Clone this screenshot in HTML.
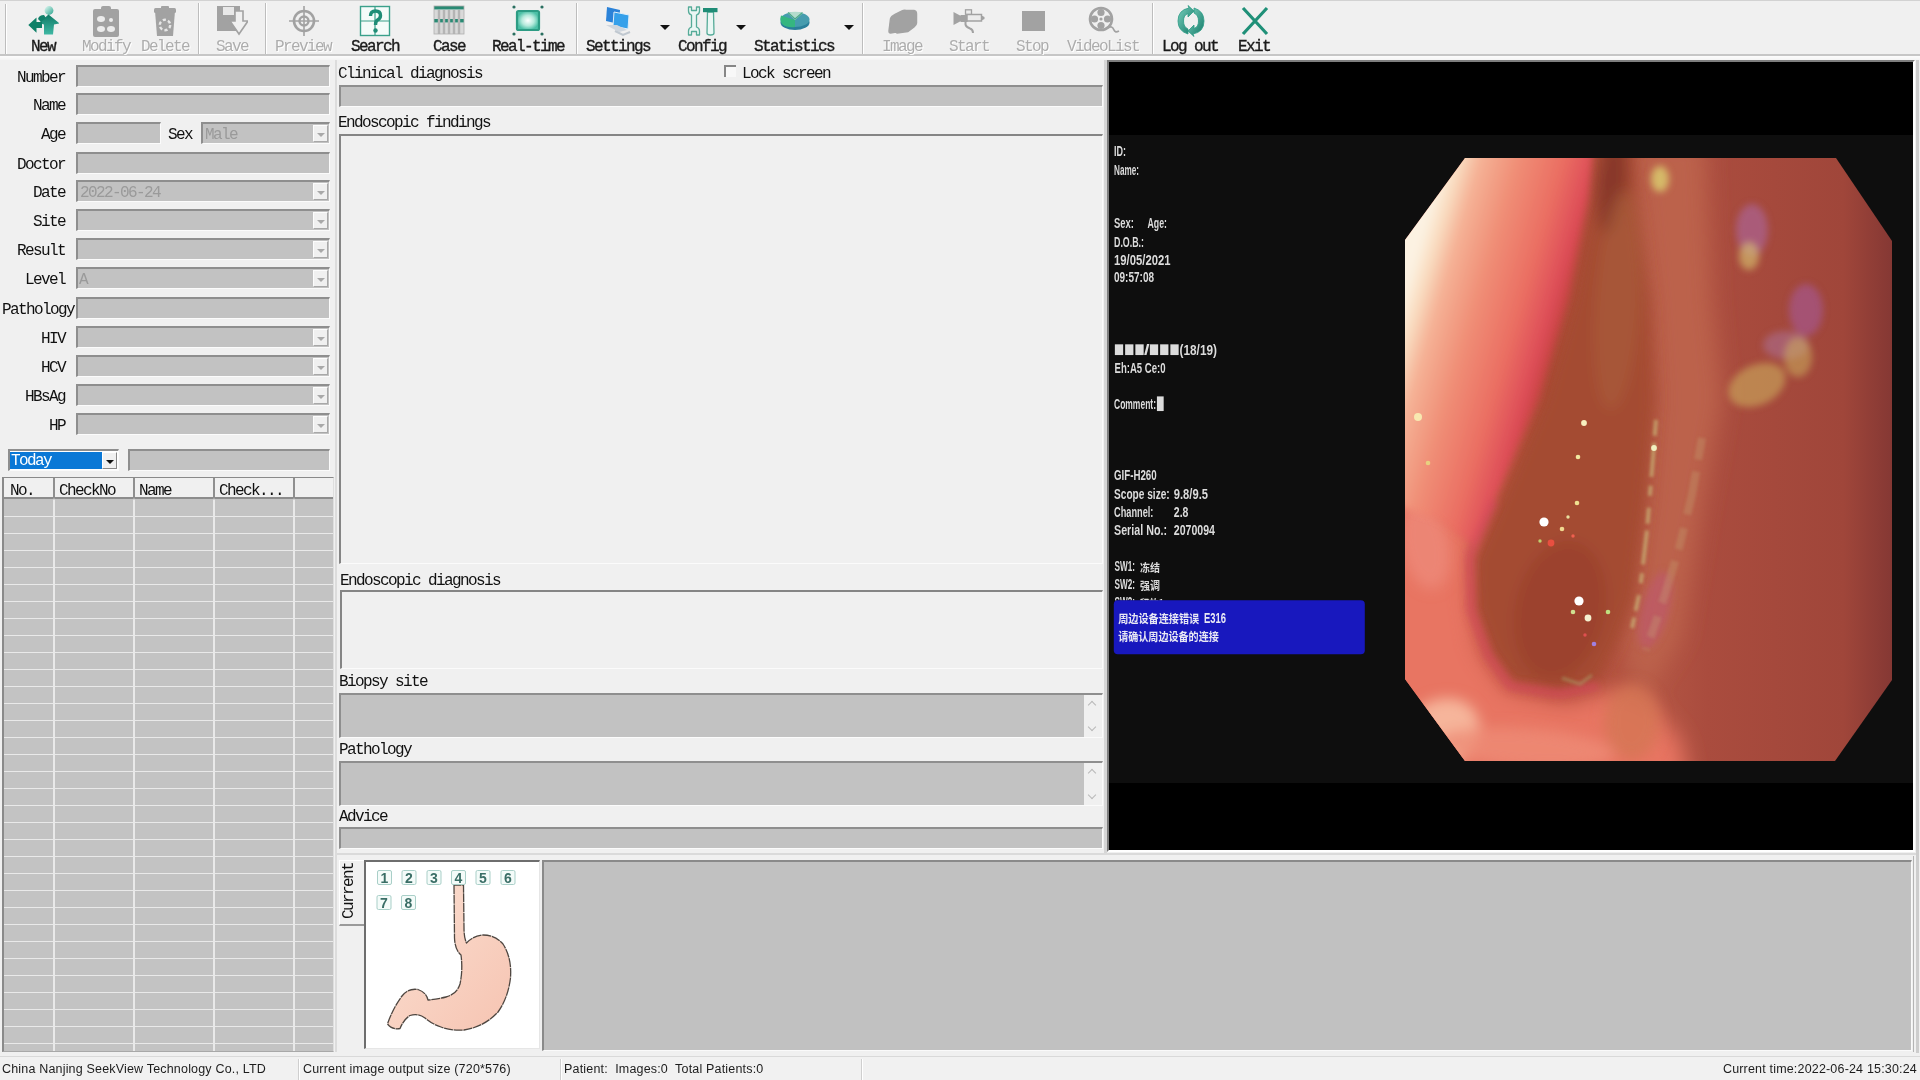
<!DOCTYPE html>
<html lang="en">
<head>
<meta charset="utf-8">
<title>SeekView Endoscopy Workstation</title>
<style>
*{box-sizing:border-box;margin:0;padding:0}
html,body{width:1920px;height:1080px;overflow:hidden;background:#f0f0f0}
body{position:relative;font-family:"Liberation Mono","Noto Sans CJK SC",monospace;font-size:16px;letter-spacing:-1.6px;color:#111;line-height:16px}
#app{position:absolute;left:0;top:0;width:1920px;height:1080px;will-change:transform}
.a{position:absolute}
.t{position:absolute;white-space:pre;height:16px}
.r{text-align:right}
.f{position:absolute;background:#c2c2c2;border-style:solid;border-width:2px 1px 1px 2px;border-color:#8e8e8e #fbfbfb #fbfbfb #8e8e8e}
.fw{position:absolute;background:#f0f0f0;border-style:solid;border-width:2px 1px 1px 2px;border-color:#858585 #fbfbfb #fbfbfb #858585}
.cb{position:absolute;right:1px;top:1px;bottom:1px;width:15px;background:#f0f0f0;border:1px solid #fdfdfd;border-right-color:#a8a8a8;border-bottom-color:#a8a8a8}
.cb:after{content:"";position:absolute;left:3px;top:7px;border:4px solid transparent;border-top:4px solid #a9a9a9;border-bottom:0}
.g{color:#9a9a9a}
.vl{top:0;width:2px;height:100%;background:linear-gradient(180deg,#8f8f8f 0,#8f8f8f 20px,#e9e9e9 22px)}
.cb.k{border-color:#fff #888 #888 #fff}
.cb.k:after{border-top-color:#111}
.sc{position:absolute;right:0;top:0;bottom:0;width:18px;background:#f0f0f0}
.sc i{position:absolute;left:5px;width:6px;height:6px;border:1.5px solid #b9b9b9;border-right:0;border-bottom:0}
.sc .u{top:7px;transform:rotate(45deg)}
.sc .dn{bottom:7px;transform:rotate(225deg)}
/* toolbar */
#tb{position:absolute;left:0;top:0;width:1920px;height:56px;background:#f0f0f0;border-top:1px solid #d2d2d2;border-bottom:2px solid #c6c6c6}
#tb .l{position:absolute;top:38px;height:16px;font-weight:normal;-webkit-text-stroke:.35px #1a1a1a;white-space:pre;transform:translateX(-50%);color:#1a1a1a}
#tb .d{color:#adadad;text-shadow:1px 1px 0 #fff;-webkit-text-stroke:0}
#tb .s{position:absolute;top:2px;height:51px;width:2px;border-left:1px solid #bdbdbd;border-right:1px solid #fff}
#tb .ar{position:absolute;top:24px;border:5px solid transparent;border-top:5px solid #111;border-bottom:0}
#tb svg{position:absolute}
/* status */
#sb{position:absolute;left:0;top:1056px;width:1920px;height:24px;background:#f1f1f1;border-top:1px solid #d9d9d9;font-family:"Liberation Sans",sans-serif;font-size:12.5px;letter-spacing:.18px;color:#1c1c1c}
#sb span{position:absolute;top:4px;white-space:pre}
#sb i{position:absolute;top:2px;height:22px;width:2px;border-left:1px solid #cfcfcf;border-right:1px solid #fff}
</style>
</head>
<body>
<div id="app">
<div id="tb">
<b class="s" style="left:5px;top:3px;height:50px"></b>
<svg style="left:27.0px;top:4px" width="32" height="32" viewBox="0 0 32 32"><defs><linearGradient id="gn" x1="0" y1="0" x2="0" y2="1"><stop offset="0" stop-color="#0f7a66"/><stop offset="1" stop-color="#3fb8a4"/></linearGradient><linearGradient id="gh" x1="0" y1="0" x2="1" y2="1"><stop offset="0" stop-color="#e8fbf6"/><stop offset="1" stop-color="#2aa48e"/></linearGradient></defs>
<circle cx="22" cy="5.5" r="4.4" fill="url(#gh)"/><path d="M21.500 9.500 L32.500 18.500 L27 19.500 L26 29.500 L17 29.500 L17 19.500 L12 18 Z" fill="url(#gn)"/><path d="M1.300 20 L9.500 12.500 L9.500 17 L15 17 L15 23 L9.500 23 L9.500 27.700 Z" fill="#0f8068"/><path d="M11 14 Q12 10 17 10 L19 13 L14 17 Z" fill="#12806a"/></svg>
<span class="l" style="left:43px">New</span>
<svg style="left:90.0px;top:4px" width="32" height="32" viewBox="0 0 32 32"><rect x="3" y="4" width="26" height="28" rx="2" fill="#a2a2a2"/><rect x="11" y="1" width="10" height="6" rx="2" fill="#a2a2a2"/><ellipse cx="11" cy="14" rx="4" ry="3" fill="#ececec"/><ellipse cx="21" cy="15" rx="2" ry="2" fill="#ececec"/><ellipse cx="11" cy="24" rx="4" ry="3" fill="#ececec"/><ellipse cx="21" cy="24" rx="4" ry="3" fill="#ececec"/></svg>
<span class="l d" style="left:106px">Modify</span>
<svg style="left:149.0px;top:4px" width="32" height="32" viewBox="0 0 32 32"><path d="M6 6 L26 6 L24 31 L8 31 Z" fill="#a2a2a2"/><rect x="5" y="3" width="22" height="5" rx="1.5" fill="#a2a2a2"/><rect x="12" y="1" width="8" height="4" rx="1" fill="#a2a2a2"/><circle cx="16" cy="20" r="5.2" fill="none" stroke="#e6e6e6" stroke-width="2.4" stroke-dasharray="3.2 2.2"/></svg>
<span class="l d" style="left:165px">Delete</span>
<b class="s" style="left:198px"></b>
<svg style="left:216.0px;top:4px" width="32" height="32" viewBox="0 0 32 32"><path d="M1 1 L24 1 L24 26 L1 26 Z" fill="#a2a2a2"/><rect x="7" y="2" width="11" height="8" fill="#e8e8e8"/><path d="M19 6 L27 6 L27 16 L32 16 L23 29 L14 16 L19 16 Z" fill="#f0f0f0" stroke="#a2a2a2" stroke-width="1.6"/></svg>
<span class="l d" style="left:232px">Save</span>
<b class="s" style="left:265px"></b>
<svg style="left:287.5px;top:4px" width="32" height="32" viewBox="0 0 32 32"><circle cx="16" cy="16" r="10" fill="none" stroke="#a2a2a2" stroke-width="2.6"/><circle cx="16" cy="16" r="4.5" fill="none" stroke="#a2a2a2" stroke-width="2.4"/><path d="M16 1 V31 M1 16 H31" stroke="#a2a2a2" stroke-width="1.6"/></svg>
<span class="l d" style="left:303px">Preview</span>
<svg style="left:358.5px;top:4px" width="32" height="32" viewBox="0 0 32 32"><rect x="1.5" y="1.5" width="29" height="29" fill="#f4fbf9" stroke="#3aa08a" stroke-width="1.4"/><path d="M16 1 V31 M1 16 H31" stroke="#3aa08a" stroke-width="1.2"/><path d="M11.5 11 Q11.5 6 16.5 6 Q21.5 6 21.5 10.5 Q21.5 13.5 18.5 15 Q16.5 16.2 16.5 20" fill="none" stroke="#1e8c76" stroke-width="3.4"/><circle cx="16.5" cy="25.5" r="2.2" fill="#1e8c76"/></svg>
<span class="l" style="left:375px">Search</span>
<svg style="left:433.0px;top:4px" width="32" height="32" viewBox="0 0 32 32"><rect x="1" y="1" width="30" height="3.5" fill="#2a8a74"/><rect x="1" y="14" width="30" height="3.5" fill="#2a8a74"/><rect x="1" y="5" width="30" height="9" fill="#d9d9d9"/><rect x="1" y="18" width="30" height="11" fill="#d9d9d9"/><path d="M6 5 V29 M11 5 V29 M16 5 V29 M21 5 V29 M26 5 V29" stroke="#b4b4b4" stroke-width="2.4"/><rect x="1" y="1" width="30" height="28" fill="none" stroke="#b0b0b0" stroke-width=".8"/></svg>
<span class="l" style="left:449px">Case</span>
<svg style="left:512.0px;top:4px" width="32" height="32" viewBox="0 0 32 32"><defs><radialGradient id="gr"><stop offset="0" stop-color="#fff"/><stop offset=".55" stop-color="#b6eadc"/><stop offset="1" stop-color="#4cc0a6"/></radialGradient></defs><rect x="5" y="6" width="22" height="19" rx="1.5" fill="url(#gr)" stroke="#2d9c84" stroke-width="2.2"/><circle cx="2" cy="2" r="1.6" fill="#2a6f60"/><circle cx="30" cy="2" r="1.6" fill="#2a6f60"/><circle cx="2" cy="29" r="1.6" fill="#2a6f60"/><circle cx="30" cy="29" r="1.6" fill="#2a6f60"/></svg>
<span class="l" style="left:528px">Real-time</span>
<b class="s" style="left:576px"></b>
<svg style="left:602.5px;top:4px" width="32" height="32" viewBox="0 0 32 32"><path d="M4 2 L17 5 L16 19 L3 16 Z" fill="#2b82d8"/><path d="M11 7 L26 10 L25 24 L10 21 Z" fill="#35a0ea" stroke="#dfeefa" stroke-width="1"/><path d="M3 20 L16 27 L24 25 L14 20 Z" fill="#cfd6de"/><path d="M12 26 L20 30 L27 27" fill="none" stroke="#c0c8d0" stroke-width="2"/></svg>
<span class="l" style="left:618px">Settings</span>
<b class="ar" style="left:660px"></b>
<svg style="left:686.5px;top:4px" width="32" height="32" viewBox="0 0 32 32"><path d="M1.500 2 L1.500 6 Q1.500 9 4.500 10 L4.500 22 Q1.500 23 1.500 26 L1.500 30 L4.500 30 L4.500 26.500 L9.500 26.500 L9.500 30 L12.500 30 L12.500 26 Q12.500 23 9.500 22 L9.500 10 Q12.500 9 12.500 6 L12.500 2 L9.500 2 L9.500 5.500 L4.500 5.500 L4.500 2 Z" fill="#eaf7f4" stroke="#55ab98" stroke-width="1.300" stroke-linejoin="round"/><path d="M20.500 7 L20 28 Q20 30 23.500 30 Q27 30 27 28 L26.500 7 Z" fill="#eaf7f4" stroke="#55ab98" stroke-width="1.300"/><rect x="16" y="3" width="14.500" height="4.200" fill="#1f8c76"/></svg>
<span class="l" style="left:702px">Config</span>
<b class="ar" style="left:736px"></b>
<svg style="left:778.5px;top:4px" width="32" height="32" viewBox="0 0 32 32"><ellipse cx="16" cy="17.500" rx="14.500" ry="7.500" fill="#2a7f9a"/><ellipse cx="16" cy="14.500" rx="14.500" ry="7.500" fill="#469cae"/><path d="M16 15 L2 10.500 Q0.500 15 3 19 Q8 23 16 22 Z" fill="#35b680"/><path d="M16 15 L8.500 8 Q16 5.500 24 8 Z" fill="#b4dccd"/><path d="M9 7.500 L16 14 L23.500 7.500" fill="none" stroke="#4aa888" stroke-width="1.200"/></svg>
<span class="l" style="left:794px">Statistics</span>
<b class="ar" style="left:844px"></b>
<b class="s" style="left:862px"></b>
<svg style="left:886.5px;top:4px" width="32" height="32" viewBox="0 0 32 32"><path d="M3.500 14 Q4 11.500 8 9.500 L15 6 Q17 5 19 5.500 L27 5.500 Q29.500 6 29.500 9 L29.500 18 Q29.500 20 27 22 L21 26.500 L10 28 L9 27 L3.500 28 Q2 28 2 26 Z" fill="#a2a2a2" stroke="#a2a2a2" stroke-width="1.500" stroke-linejoin="round"/></svg>
<span class="l d" style="left:902px">Image</span>
<svg style="left:953.0px;top:4px" width="32" height="32" viewBox="0 0 32 32"><path d="M0.500 7 L8 11 L8 16 L0.500 20 Z" fill="#a2a2a2"/><rect x="7.500" y="10" width="7" height="7" fill="#a2a2a2"/><rect x="14" y="9.500" width="14.500" height="6.500" fill="#ececec" stroke="#a2a2a2" stroke-width="1.500"/><path d="M28.500 10.500 L31.500 12 L31.500 14 L28.500 15.500 Z" fill="#a2a2a2"/><rect x="12.500" y="4.800" width="6" height="4.500" fill="#ececec" stroke="#a2a2a2" stroke-width="1.300"/><path d="M12.500 16 L12.500 19.500 Q13 22 17 23.500 Q20 24.500 20 28" fill="none" stroke="#a2a2a2" stroke-width="2"/></svg>
<span class="l d" style="left:969px">Start</span>
<svg style="left:1016.5px;top:4px" width="32" height="32" viewBox="0 0 32 32"><rect x="5" y="6" width="23" height="20" fill="#a2a2a2"/></svg>
<span class="l d" style="left:1032px">Stop</span>
<svg style="left:1087.5px;top:4px" width="32" height="32" viewBox="0 0 32 32"><circle cx="13" cy="14" r="11" fill="none" stroke="#a2a2a2" stroke-width="2.6"/><circle cx="13" cy="7.5" r="3.6" fill="#a2a2a2"/><circle cx="13" cy="20.5" r="3.6" fill="#a2a2a2"/><circle cx="6.5" cy="14" r="3.6" fill="#a2a2a2"/><circle cx="19.5" cy="14" r="3.6" fill="#a2a2a2"/><circle cx="13" cy="14" r="1.6" fill="#a2a2a2"/><path d="M20 23 Q24 20 26 25 Q27 28 31 26" fill="none" stroke="#a2a2a2" stroke-width="1.8"/></svg>
<span class="l d" style="left:1103px">VideoList</span>
<b class="s" style="left:1152px"></b>
<svg style="left:1175.0px;top:4px" width="32" height="32" viewBox="0 0 32 32"><defs><linearGradient id="gl" x1="0" y1="0" x2="1" y2="1"><stop offset="0" stop-color="#7ad0be"/><stop offset="1" stop-color="#127866"/></linearGradient></defs><path d="M14 3 Q3 5 3 16 Q3 26 13 29 L13 24 Q8.5 22 8.5 16 Q8.5 10 13 8.5 L13 12 L19 6 L13 0.5 Z" fill="url(#gl)" stroke="#2a9a84" stroke-width=".8"/><path d="M18 29 Q29 27 29 16 Q29 6 19 3 L19 8 Q23.5 10 23.5 16 Q23.5 22 19 23.5 L19 20 L13 26 L19 31.5 Z" fill="url(#gl)" stroke="#2a9a84" stroke-width=".8"/></svg>
<span class="l" style="left:1190px">Log out</span>
<svg style="left:1238.5px;top:4px" width="32" height="32" viewBox="0 0 32 32"><path d="M4 3 L28 29 M28 3 L4 29" stroke="#1f9078" stroke-width="3.2" stroke-linecap="butt"/></svg>
<span class="l" style="left:1254px">Exit</span>
</div>
<div class="a" style="left:0;top:56px;width:1920px;height:4px;background:linear-gradient(180deg,#fcfcfc,#f4f4f4)"></div>

<div id="left">
<div class="t r" style="left:0;width:65px;top:70px">Number</div>
<div class="f" style="left:76px;top:65px;width:254px;height:22px"></div>
<div class="t r" style="left:0;width:65px;top:98px">Name</div>
<div class="f" style="left:76px;top:93px;width:254px;height:22px"></div>
<div class="t r" style="left:0;width:65px;top:127px">Age</div>
<div class="f" style="left:76px;top:122px;width:85px;height:22px"></div>
<div class="t" style="left:168px;top:127px">Sex</div><div class="f" style="left:201px;top:122px;width:129px;height:22px"><span class="t g" style="left:2px;top:3px">Male</span><b class="cb"></b></div>
<div class="t r" style="left:0;width:65px;top:157px">Doctor</div>
<div class="f" style="left:76px;top:152px;width:254px;height:22px"></div>
<div class="t r" style="left:0;width:65px;top:185px">Date</div>
<div class="f" style="left:76px;top:180px;width:254px;height:22px"><span class="t g" style="left:2px;top:3px">2022-06-24</span><b class="cb"></b></div>
<div class="t r" style="left:0;width:65px;top:214px">Site</div>
<div class="f" style="left:76px;top:209px;width:254px;height:22px"><b class="cb"></b></div>
<div class="t r" style="left:0;width:65px;top:243px">Result</div>
<div class="f" style="left:76px;top:238px;width:254px;height:22px"><b class="cb"></b></div>
<div class="t r" style="left:0;width:65px;top:272px">Level</div>
<div class="f" style="left:76px;top:267px;width:254px;height:22px"><span class="t g" style="left:1px;top:3px">A</span><b class="cb"></b></div>
<div class="t r" style="left:0;width:74px;top:302px">Pathology</div>
<div class="f" style="left:76px;top:297px;width:254px;height:22px"></div>
<div class="t r" style="left:0;width:65px;top:331px">HIV</div>
<div class="f" style="left:76px;top:326px;width:254px;height:22px"><b class="cb"></b></div>
<div class="t r" style="left:0;width:65px;top:360px">HCV</div>
<div class="f" style="left:76px;top:355px;width:254px;height:22px"><b class="cb"></b></div>
<div class="t r" style="left:0;width:65px;top:389px">HBsAg</div>
<div class="f" style="left:76px;top:384px;width:254px;height:22px"><b class="cb"></b></div>
<div class="t r" style="left:0;width:65px;top:418px">HP</div>
<div class="f" style="left:76px;top:413px;width:254px;height:22px"><b class="cb"></b></div>
<div class="f" style="left:8px;top:449px;width:111px;height:22px;background:#fff"><span class="t" style="left:0;top:1px;width:92px;height:17px;background:#0a78d6;color:#fff;padding-left:1px;line-height:19px">Today</span><b class="cb k"></b></div>
<div class="f" style="left:128px;top:449px;width:202px;height:22px"></div>
<div id="grid" class="a" style="left:2px;top:477px;width:332px;height:575px;border:1px solid #8a8a8a;border-width:1px 1px 1px 2px;border-right-color:#dedede;border-bottom-color:#a8a8a8;background:#c3c3c3">
<div class="a" style="left:0;top:0;width:100%;height:21px;background:#f0f0f0;border-bottom:2px solid #8c8c8c"></div>
<div class="a" style="left:0;top:22px;width:100%;bottom:0;background:repeating-linear-gradient(180deg,transparent 0,transparent 16px,#e9e9e9 16px,#e9e9e9 17px)"></div>
<div class="t" style="left:6px;top:5px">No.</div>
<div class="t" style="left:55px;top:5px">CheckNo</div>
<div class="t" style="left:135px;top:5px">Name</div>
<div class="t" style="left:215px;top:5px">Check...</div>
<i class="a vl" style="left:49px"></i>
<i class="a vl" style="left:129px"></i>
<i class="a vl" style="left:209px"></i>
<i class="a vl" style="left:289px"></i>
</div>
<div class="a" style="left:335px;top:60px;width:2px;height:992px;background:#dcdcdc"></div>
</div>

<div id="mid">
<div class="t" style="left:338px;top:66px">Clinical diagnosis</div>
<div class="a" style="left:724px;top:65px;width:12px;height:12px;background:#f8f8f8;border:2px solid #868686;border-right:0;border-bottom:0"></div>
<div class="t" style="left:742px;top:66px">Lock screen</div>
<div class="f" style="left:339px;top:85px;width:764px;height:22px"></div>
<div class="t" style="left:338px;top:115px">Endoscopic findings</div>
<div class="fw" style="left:339px;top:134px;width:764px;height:430px"></div>
<div class="t" style="left:340px;top:573px">Endoscopic diagnosis</div>
<div class="fw" style="left:340px;top:590px;width:763px;height:79px"></div>
<div class="t" style="left:339px;top:674px">Biopsy site</div>
<div class="f" style="left:339px;top:693px;width:764px;height:45px"><div class="sc"><i class="u"></i><i class="dn"></i></div></div>
<div class="t" style="left:339px;top:742px">Pathology</div>
<div class="f" style="left:339px;top:761px;width:764px;height:45px"><div class="sc"><i class="u"></i><i class="dn"></i></div></div>
<div class="t" style="left:339px;top:809px">Advice</div>
<div class="f" style="left:339px;top:827px;width:764px;height:22px"></div>
<div class="a" style="left:1104px;top:60px;width:3px;height:793px;background:#d6d6d6"></div>
</div>

<div id="vid" class="a" style="left:1107px;top:60px;width:808px;height:792px;border:2px solid #7e7e7e;border-right-color:#fff;border-bottom-color:#fff;background:#000"></div>
<svg class="a" style="left:1109px;top:62px" width="804" height="788" viewBox="1109 62 804 788">
<defs>
<clipPath id="oct"><polygon points="1465,158 1836,158 1892,241 1892,680 1835,761 1465,761 1405,679 1405,240"/></clipPath>
<filter id="b14" x="-30%" y="-30%" width="160%" height="160%"><feGaussianBlur stdDeviation="11"/></filter>
<filter id="b8" x="-30%" y="-30%" width="160%" height="160%"><feGaussianBlur stdDeviation="7"/></filter>
<filter id="b4" x="-30%" y="-30%" width="160%" height="160%"><feGaussianBlur stdDeviation="3.5"/></filter>
<filter id="b2" x="-30%" y="-30%" width="160%" height="160%"><feGaussianBlur stdDeviation="1.6"/></filter>
<filter id="b1" x="-30%" y="-30%" width="160%" height="160%"><feGaussianBlur stdDeviation="0.7"/></filter>
<linearGradient id="base" gradientUnits="userSpaceOnUse" x1="1405" y1="0" x2="1892" y2="0"><stop offset="0" stop-color="#e87060"/><stop offset=".3" stop-color="#b04a38"/><stop offset=".5" stop-color="#b45644"/><stop offset=".62" stop-color="#aa4c3e"/><stop offset=".9" stop-color="#a0463a"/><stop offset="1" stop-color="#853834"/></linearGradient>
<linearGradient id="fold" gradientUnits="userSpaceOnUse" x1="1373" y1="400" x2="1526" y2="445"><stop offset="0" stop-color="#fcf2e2"/><stop offset=".1" stop-color="#f9dcc0"/><stop offset=".22" stop-color="#f5b296"/><stop offset=".45" stop-color="#f08e76"/><stop offset=".72" stop-color="#ea6e62"/><stop offset=".9" stop-color="#de4e58"/><stop offset="1" stop-color="#c64242"/></linearGradient>
<clipPath id="sw3"><rect x="1110" y="590" width="100" height="10.5"/></clipPath>
</defs>
<rect x="1109" y="135" width="804" height="648" fill="#0e0e0e"/>
<g clip-path="url(#oct)">
<rect x="1400" y="150" width="500" height="620" fill="url(#base)"/>
<g filter="url(#b14)">
<polygon points="1634,140 1705,140 1712,300 1722,400 1700,520 1680,640 1640,700 1625,650 1648,500 1657,400 1650,300" fill="#bc624c"/>
<polygon points="1380,470 1440,470 1470,520 1468,600 1476,650 1505,690 1570,702 1605,690 1650,705 1680,740 1690,790 1380,790" fill="#e87462"/>
</g>
<g filter="url(#b8)">
<polygon points="1598,140 1592,200 1572,300 1542,400 1498,500 1472,560 1474,610 1490,655 1512,684 1560,690 1596,682 1616,646 1634,598 1646,500 1655,400 1650,300 1636,200 1632,140" fill="#a44c32"/>
<ellipse cx="1612" cy="185" rx="14" ry="50" fill="#84362a" opacity="0.85" transform="rotate(5 1612 185)"/>
<ellipse cx="1560" cy="610" rx="45" ry="70" fill="#98402e" opacity="0.7" transform="rotate(12 1560 610)"/>
<ellipse cx="1618" cy="300" rx="22" ry="110" fill="#a85c3a" opacity="0.7" transform="rotate(4 1618 300)"/>
<ellipse cx="1440" cy="735" rx="42" ry="34" fill="#f7b89e" opacity="0.95" transform="rotate(-35 1440 735)"/>
<ellipse cx="1525" cy="748" rx="90" ry="20" fill="#ee8c76" opacity="0.8" transform="rotate(4 1525 748)"/>
<ellipse cx="1632" cy="722" rx="28" ry="38" fill="#d47654" opacity="0.8" transform="rotate(0 1632 722)"/>
<ellipse cx="1425" cy="545" rx="24" ry="45" fill="#f29a8c" opacity="0.45" transform="rotate(-12 1425 545)"/>
</g>
<g filter="url(#b4)">
<polygon points="1380,140 1594,140 1588,200 1568,300 1538,400 1494,500 1472,545 1440,520 1380,500" fill="url(#fold)"/>
<polyline points="1494,500 1470,555 1471,610 1488,655 1510,686 1560,694 1598,686" fill="none" stroke="#d64a5e" stroke-width="9" opacity=".65"/>
<ellipse cx="1752" cy="230" rx="16" ry="26" fill="#b070c4" opacity="0.45" transform="rotate(0 1752 230)"/>
<ellipse cx="1806" cy="310" rx="17" ry="26" fill="#a860b8" opacity="0.45" transform="rotate(0 1806 310)"/>
<ellipse cx="1786" cy="345" rx="23" ry="14" fill="#b080b8" opacity="0.4" transform="rotate(0 1786 345)"/>
<ellipse cx="1757" cy="385" rx="30" ry="20" fill="#d4c062" opacity="0.5" transform="rotate(-25 1757 385)"/>
<ellipse cx="1798" cy="357" rx="14" ry="20" fill="#d0b860" opacity="0.5" transform="rotate(0 1798 357)"/>
<ellipse cx="1749" cy="256" rx="10" ry="14" fill="#d8c870" opacity="0.6" transform="rotate(0 1749 256)"/>
<ellipse cx="1660" cy="179" rx="9" ry="13" fill="#dcd070" opacity="0.8" transform="rotate(0 1660 179)"/>
<ellipse cx="1655" cy="610" rx="14" ry="40" fill="#c05878" opacity="0.5" transform="rotate(15 1655 610)"/>
</g>
<g filter="url(#b2)">
<polyline points="1656,420 1652,470 1647,530 1640,590 1632,628" fill="none" stroke="#d2d88c" stroke-width="4" opacity=".5" stroke-dasharray="16 7 34 9 10 12"/>
<polyline points="1702,438 1692,495 1678,552 1660,610 1646,650" fill="none" stroke="#c6ae78" stroke-width="8" opacity=".28" stroke-dasharray="22 12 44 14"/>
<polyline points="1562,678 1580,684 1592,675" fill="none" stroke="#a8b070" stroke-width="3" opacity=".45"/>
</g>
<g filter="url(#b1)">
<circle cx="1544" cy="522" r="4.6" fill="#fff"/>
<circle cx="1579" cy="601" r="4.6" fill="#fff"/>
<circle cx="1588" cy="618" r="3.4" fill="#f4f0d0"/>
<circle cx="1584" cy="423" r="2.9" fill="#f8f0c0"/>
<circle cx="1418" cy="417" r="4.0" fill="#f8e8b0"/>
<circle cx="1578" cy="457" r="2.3" fill="#f0e8a0"/>
<circle cx="1562" cy="529" r="2.3" fill="#f0d890"/>
<circle cx="1551" cy="543" r="3.4" fill="#e85040"/>
<circle cx="1573" cy="536" r="1.7" fill="#f06050"/>
<circle cx="1577" cy="503" r="2.3" fill="#f0e090"/>
<circle cx="1568" cy="517" r="1.7" fill="#e8e0a0"/>
<circle cx="1654" cy="448" r="2.9" fill="#f0f0c0"/>
<circle cx="1608" cy="612" r="2.3" fill="#c0e080"/>
<circle cx="1594" cy="644" r="2.3" fill="#a080e0"/>
<circle cx="1585" cy="635" r="1.7" fill="#e05050"/>
<circle cx="1428" cy="463" r="2.3" fill="#e8d080"/>
<circle cx="1540" cy="541" r="1.7" fill="#c0d070"/>
<circle cx="1573" cy="612" r="2.3" fill="#d0e090"/>
</g>
</g>
<g id="osd" style="letter-spacing:0" xml:space="preserve">
<text x="1114" y="156" textLength="12" lengthAdjust="spacingAndGlyphs" font-family="Liberation Sans, sans-serif" font-size="14.5" font-weight="bold" fill="#dcdcdc" >ID:</text>
<text x="1114" y="174.5" textLength="25" lengthAdjust="spacingAndGlyphs" font-family="Liberation Sans, sans-serif" font-size="14.5" font-weight="bold" fill="#dcdcdc" >Name:</text>
<text x="1114" y="228" textLength="20" lengthAdjust="spacingAndGlyphs" font-family="Liberation Sans, sans-serif" font-size="14.5" font-weight="bold" fill="#dcdcdc" >Sex:</text>
<text x="1147.5" y="228" textLength="19.5" lengthAdjust="spacingAndGlyphs" font-family="Liberation Sans, sans-serif" font-size="14.5" font-weight="bold" fill="#dcdcdc" >Age:</text>
<text x="1114" y="246.7" textLength="30" lengthAdjust="spacingAndGlyphs" font-family="Liberation Sans, sans-serif" font-size="14.5" font-weight="bold" fill="#dcdcdc" >D.O.B.:</text>
<text x="1114" y="264.5" textLength="56.5" lengthAdjust="spacingAndGlyphs" font-family="Liberation Sans, sans-serif" font-size="14.5" font-weight="bold" fill="#dcdcdc" >19/05/2021</text>
<text x="1114" y="282" textLength="40" lengthAdjust="spacingAndGlyphs" font-family="Liberation Sans, sans-serif" font-size="14.5" font-weight="bold" fill="#dcdcdc" >09:57:08</text>
<text x="1115" y="352.6" textLength="8" lengthAdjust="spacingAndGlyphs" font-family="DejaVu Sans Mono, sans-serif" font-size="9" font-weight="normal" fill="#dcdcdc" >&#9608;</text>
<text x="1125.3" y="352.6" textLength="8" lengthAdjust="spacingAndGlyphs" font-family="DejaVu Sans Mono, sans-serif" font-size="9" font-weight="normal" fill="#dcdcdc" >&#9608;</text>
<text x="1135.5" y="352.6" textLength="8" lengthAdjust="spacingAndGlyphs" font-family="DejaVu Sans Mono, sans-serif" font-size="9" font-weight="normal" fill="#dcdcdc" >&#9608;</text>
<text x="1150" y="352.6" textLength="8" lengthAdjust="spacingAndGlyphs" font-family="DejaVu Sans Mono, sans-serif" font-size="9" font-weight="normal" fill="#dcdcdc" >&#9608;</text>
<text x="1160.3" y="352.6" textLength="8" lengthAdjust="spacingAndGlyphs" font-family="DejaVu Sans Mono, sans-serif" font-size="9" font-weight="normal" fill="#dcdcdc" >&#9608;</text>
<text x="1170.5" y="352.6" textLength="8" lengthAdjust="spacingAndGlyphs" font-family="DejaVu Sans Mono, sans-serif" font-size="9" font-weight="normal" fill="#dcdcdc" >&#9608;</text>
<text x="1144" y="354.6" textLength="5.5" lengthAdjust="spacingAndGlyphs" font-family="Liberation Sans, sans-serif" font-size="14.5" font-weight="bold" fill="#dcdcdc" >/</text>
<text x="1179.5" y="354.6" textLength="37.5" lengthAdjust="spacingAndGlyphs" font-family="Liberation Sans, sans-serif" font-size="14.5" font-weight="bold" fill="#dcdcdc" >(18/19)</text>
<text x="1114.5" y="372.5" textLength="51" lengthAdjust="spacingAndGlyphs" font-family="Liberation Sans, sans-serif" font-size="14.5" font-weight="bold" fill="#dcdcdc" >Eh:A5 Ce:0</text>
<text x="1114" y="409" textLength="42" lengthAdjust="spacingAndGlyphs" font-family="Liberation Sans, sans-serif" font-size="14.5" font-weight="bold" fill="#dcdcdc" >Comment:</text>
<text x="1157" y="408" textLength="6.5" lengthAdjust="spacingAndGlyphs" font-family="DejaVu Sans Mono, sans-serif" font-size="12.3" font-weight="normal" fill="#dcdcdc" >&#9608;</text>
<text x="1114" y="480.4" textLength="42.7" lengthAdjust="spacingAndGlyphs" font-family="Liberation Sans, sans-serif" font-size="14.5" font-weight="bold" fill="#dcdcdc" >GIF-H260</text>
<text x="1114" y="498.7" textLength="55.7" lengthAdjust="spacingAndGlyphs" font-family="Liberation Sans, sans-serif" font-size="14.5" font-weight="bold" fill="#dcdcdc" >Scope size:</text>
<text x="1173.8" y="498.7" textLength="34.2" lengthAdjust="spacingAndGlyphs" font-family="Liberation Sans, sans-serif" font-size="14.5" font-weight="bold" fill="#dcdcdc" >9.8/9.5</text>
<text x="1114" y="516.7" textLength="39.4" lengthAdjust="spacingAndGlyphs" font-family="Liberation Sans, sans-serif" font-size="14.5" font-weight="bold" fill="#dcdcdc" >Channel:</text>
<text x="1173.8" y="516.7" textLength="14.6" lengthAdjust="spacingAndGlyphs" font-family="Liberation Sans, sans-serif" font-size="14.5" font-weight="bold" fill="#dcdcdc" >2.8</text>
<text x="1114" y="534.6" textLength="53" lengthAdjust="spacingAndGlyphs" font-family="Liberation Sans, sans-serif" font-size="14.5" font-weight="bold" fill="#dcdcdc" >Serial No.:</text>
<text x="1173.8" y="534.6" textLength="41.2" lengthAdjust="spacingAndGlyphs" font-family="Liberation Sans, sans-serif" font-size="14.5" font-weight="bold" fill="#dcdcdc" >2070094</text>
<text x="1114.5" y="571" textLength="20.5" lengthAdjust="spacingAndGlyphs" font-family="Liberation Sans, sans-serif" font-size="14.5" font-weight="bold" fill="#dcdcdc" >SW1:</text>
<text x="1140" y="571.5" textLength="20" lengthAdjust="spacingAndGlyphs" font-family="Noto Sans CJK SC, sans-serif" font-size="11.5" font-weight="bold" fill="#dcdcdc" >冻结</text>
<text x="1114.5" y="589" textLength="20.5" lengthAdjust="spacingAndGlyphs" font-family="Liberation Sans, sans-serif" font-size="14.5" font-weight="bold" fill="#dcdcdc" >SW2:</text>
<text x="1140" y="589.5" textLength="20" lengthAdjust="spacingAndGlyphs" font-family="Noto Sans CJK SC, sans-serif" font-size="11.5" font-weight="bold" fill="#dcdcdc" >强调</text>
<g clip-path="url(#sw3)">
<text x="1114.5" y="607" textLength="20.5" lengthAdjust="spacingAndGlyphs" font-family="Liberation Sans, sans-serif" font-size="14.5" font-weight="bold" fill="#dcdcdc" >SW3:</text>
<text x="1140" y="607.5" textLength="24" lengthAdjust="spacingAndGlyphs" font-family="Noto Sans CJK SC, sans-serif" font-size="11.5" font-weight="bold" fill="#dcdcdc" >释放1</text>
</g>
<rect x="1113.8" y="600.3" width="251" height="54" rx="4" fill="#1818be"/>
<text x="1118.2" y="622.5" textLength="81" lengthAdjust="spacingAndGlyphs" font-family="Noto Sans CJK SC, sans-serif" font-size="11.5" font-weight="bold" fill="#e8e8f4" >周边设备连接错误</text>
<text x="1204" y="622.5" textLength="22" lengthAdjust="spacingAndGlyphs" font-family="Liberation Sans, sans-serif" font-size="14" font-weight="bold" fill="#e8e8f4" >E316</text>
<text x="1118.2" y="640.5" textLength="100.6" lengthAdjust="spacingAndGlyphs" font-family="Noto Sans CJK SC, sans-serif" font-size="11.5" font-weight="bold" fill="#e8e8f4" >请确认周边设备的连接</text>
</g>
</svg>

<div id="bot">
<div class="a" style="left:337px;top:853px;width:1580px;height:2px;background:#dadada"></div>
<div class="a" style="left:1916px;top:60px;width:3px;height:993px;background:#cdcdcd"></div>
<div class="a" style="left:1913px;top:856px;width:1px;height:196px;background:#b4b4b4"></div>
<div class="a" style="left:339px;top:860px;width:26px;height:66px;background:#f0f0f0;border:1px solid #fff;border-right:0;border-bottom:2px solid #9a9a9a"></div>
<div class="t" style="left:316px;top:883px;width:66px;text-align:center;transform:rotate(-90deg)">Current</div>
<div class="a" style="left:364px;top:860px;width:176px;height:189px;background:#fff;border:2px solid #6e6e6e;border-right:1px solid #e6e6e6;border-bottom:1px solid #e6e6e6"></div>
<div class="a" style="left:542px;top:860px;width:1370px;height:191px;background:#c1c1c1;border:2px solid #8a8a8a;border-right:1px solid #fafafa;border-bottom:1px solid #fafafa"></div>
<svg class="a" style="left:366px;top:861px" width="173" height="187" viewBox="366 861 173 187">
<defs><linearGradient id="st" x1="0" y1="0" x2="1" y2="1"><stop offset="0" stop-color="#fbe0d2"/><stop offset="1" stop-color="#f6c4b2"/></linearGradient></defs>
<path d="M454 885 L454.500 938 Q455 950 461 955 Q463 970 460 984 Q457 994 446 997 Q436 999.500 428 1000 Q426 992 418 989.500 Q408 988 402 996 Q393 1008 387.500 1024 Q392 1030 400 1028.500 Q404 1019 410 1015.500 Q418 1013 425 1018 Q432 1024 441 1027 Q452 1031 464 1030 Q484 1027 498 1012 Q508 998 510.500 978 Q512 958 503 944 Q495 935 483 935 Q473 936 466.500 943 Q464 938 464 928 L463.500 885 Z" fill="url(#st)" stroke="#4e4640" stroke-width="1.3" stroke-dasharray="9 0.7" stroke-linejoin="round"/>
<g font-family="Liberation Sans, sans-serif" font-size="14" font-weight="bold" fill="#3a6e66" text-anchor="middle" style="letter-spacing:0">
<rect x="377.500" y="870.500" width="14" height="14" rx="1.500" fill="#f4fbf9" stroke="#a9cfc8"/><text x="384.500" y="883">1</text>
<rect x="402" y="870.500" width="14" height="14" rx="1.500" fill="#f4fbf9" stroke="#a9cfc8"/><text x="409" y="883">2</text>
<rect x="427" y="870.500" width="14" height="14" rx="1.500" fill="#f4fbf9" stroke="#a9cfc8"/><text x="434" y="883">3</text>
<rect x="451.500" y="870.500" width="14" height="14" rx="1.500" fill="#f4fbf9" stroke="#a9cfc8"/><text x="458.500" y="883">4</text>
<rect x="476" y="870.500" width="14" height="14" rx="1.500" fill="#f4fbf9" stroke="#a9cfc8"/><text x="483" y="883">5</text>
<rect x="501" y="870.500" width="14" height="14" rx="1.500" fill="#f4fbf9" stroke="#a9cfc8"/><text x="508" y="883">6</text>
<rect x="377" y="895.500" width="14" height="14" rx="1.500" fill="#f4fbf9" stroke="#a9cfc8"/><text x="384" y="908">7</text>
<rect x="401.500" y="895.500" width="14" height="14" rx="1.500" fill="#f4fbf9" stroke="#a9cfc8"/><text x="408.500" y="908">8</text>
</g>
</svg>
</div>

<div id="sb">
<span style="left:2px">China Nanjing SeekView Technology Co., LTD</span><i style="left:298px"></i>
<span style="left:303px">Current image output size (720*576)</span><i style="left:560px"></i>
<span style="left:564px">Patient:  Images:0  Total Patients:0</span><i style="left:861px"></i>
<span style="right:3px">Current time:2022-06-24 15:30:24</span>
</div>

</div>
</body>
</html>
